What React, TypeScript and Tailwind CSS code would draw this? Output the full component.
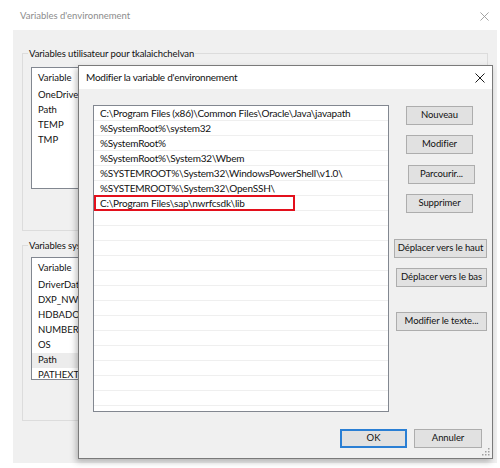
import React from 'react';

const pathItems = [
  'C:\\Program Files (x86)\\Common Files\\Oracle\\Java\\javapath',
  '%SystemRoot%\\system32',
  '%SystemRoot%',
  '%SystemRoot%\\System32\\Wbem',
  '%SYSTEMROOT%\\System32\\WindowsPowerShell\\v1.0\\',
  '%SYSTEMROOT%\\System32\\OpenSSH\\',
  'C:\\Program Files\\sap\\nwrfcsdk\\lib',
];

const userVars = ['OneDrive', 'Path', 'TEMP', 'TMP'];
const systemVars = ['DriverData', 'DXP_NWRFC', 'HDBADONET', 'NUMBER_OF_PROCESSORS', 'OS', 'Path', 'PATHEXT'];

function WinButton({ label, className = '' }: { label: string; className?: string }) {
  return (
    <button
      type="button"
      className={`h-[19px] flex items-center justify-center whitespace-nowrap border border-[#adadad] bg-[#e1e1e1] text-[9.5px] tracking-[-0.1px] text-[#111] ${className}`}
    >
      {label}
    </button>
  );
}

// petite croix de fermeture, trait fin
function CloseIcon({ color, size }: { color: string; size: number }) {
  return (
    <svg width={size} height={size} viewBox="0 0 10 10">
      <path d="M0.5 0.5 L9.5 9.5 M9.5 0.5 L0.5 9.5" stroke={color} strokeWidth="1" fill="none" />
    </svg>
  );
}

function VarList({ rows, selected, height }: { rows: string[]; selected?: number; height: string }) {
  return (
    <div className={`ml-[8px] mr-[8px] bg-white border border-[#828790] overflow-hidden text-[9.5px] ${height}`}>
      <div className="h-[20px] flex items-center pl-[6px]">Variable</div>
      {rows.map((r, i) => (
        <div
          key={r}
          className={`h-[15px] flex items-center pl-[6px] whitespace-nowrap ${i === selected ? 'bg-[#ececec]' : ''}`}
        >
          {r}
        </div>
      ))}
    </div>
  );
}

export default function App() {
  const emptyRows = Array.from({ length: 14 });

  return (
    <div className="relative w-[500px] h-[468px] bg-white overflow-hidden text-[#111] font-['Lato',sans-serif]">
      {/* fenêtre principale */}
      <div className="flex flex-col">
        <div className="h-[30px] flex items-center justify-between pl-[20px] pr-[11px] pt-[2px]">
          <span className="text-[9.5px] text-[#8c8c8c]">Variables d'environnement</span>
          <CloseIcon color="#9a9a9a" size={9} />
        </div>
        <div className="ml-[13px] mr-[3px] h-[433px] bg-[#f0f0f0] px-[9px] pt-[16px]">
          <fieldset className="h-[185px] border border-[#dcdcdc]">
            <legend className="ml-[5px] px-[1px] text-[9.5px] tracking-[-0.1px] leading-[15px]">
              Variables utilisateur pour tkalaichchelvan
            </legend>
            <div className="mt-[6px]">
              <VarList rows={userVars} height="h-[122px]" />
            </div>
          </fieldset>
          <fieldset className="mt-[7px] h-[183px] border border-[#dcdcdc]">
            <legend className="ml-[5px] px-[1px] text-[9.5px] tracking-[-0.1px] leading-[15px]">Variables système</legend>
            <div className="mt-[4px]">
              <VarList rows={systemVars} selected={5} height="h-[123px]" />
            </div>
          </fieldset>
        </div>
      </div>

      {/* boîte de dialogue modale */}
      <div className="absolute left-[78px] top-[65px] w-[415px] h-[394px] flex flex-col border border-[#7a7a7a] bg-[#f0f0f0] shadow-[-2px_3px_6px_rgba(0,0,0,0.25)]">
        <div className="h-[23px] shrink-0 bg-white flex items-center justify-between pl-[7px] pr-[7px]">
          <span className="text-[10px] tracking-[-0.25px]">Modifier la variable d'environnement</span>
          <CloseIcon color="#1b1b1b" size={10} />
        </div>
        <div className="flex pt-[16px]">
          <div className="ml-[14px] w-[296px] h-[307px] bg-white border border-[#828790] overflow-hidden text-[10px] tracking-[-0.2px]">
            {pathItems.map((p, i) => (
              <div key={p} className="relative h-[15px] flex items-center pl-[6px] border-b border-[#efefef] whitespace-nowrap">
                {p}
                {i === pathItems.length - 1 && (
                  <div className="absolute left-0 top-[-1px] w-[201px] h-[16px] border-2 border-[#e3101c]" />
                )}
              </div>
            ))}
            {emptyRows.map((_, i) => (
              <div key={i} className="h-[15px] border-b border-[#efefef]" />
            ))}
          </div>
          <div className="ml-[5px] mt-[1px] w-[93px] flex flex-col">
            <WinButton label="Nouveau" className="ml-[12px] w-[67px]" />
            <WinButton label="Modifier" className="ml-[12px] w-[67px] mt-[10px]" />
            <WinButton label="Parcourir..." className="ml-[14px] w-[67px] mt-[11px]" />
            <WinButton label="Supprimer" className="ml-[12px] w-[67px] mt-[10px]" />
            <WinButton label="Déplacer vers le haut" className="w-[93px] mt-[26px]" />
            <WinButton label="Déplacer vers le bas" className="ml-[2px] w-[91px] mt-[10px]" />
            <WinButton label="Modifier le texte..." className="ml-[2px] w-[91px] mt-[25px]" />
          </div>
        </div>
        <div className="flex justify-end gap-[7px] pr-[10px] mt-[17px]">
          <button
            type="button"
            className="h-[19px] w-[67px] flex items-center justify-center border-2 border-[#2a7fd4] bg-[#e1e1e1] text-[9.5px]"
          >
            OK
          </button>
          <WinButton label="Annuler" className="w-[68px]" />
        </div>
        {/* poignée de redimensionnement */}
        <svg className="absolute right-[2px] bottom-[2px]" width="8" height="8" viewBox="0 0 8 8">
          {[
            [6, 0],
            [6, 3],
            [3, 3],
            [6, 6],
            [3, 6],
            [0, 6],
          ].map(([x, y]) => (
            <rect key={`${x}-${y}`} x={x} y={y} width="1.5" height="1.5" fill="#a0a0a0" />
          ))}
        </svg>
      </div>
    </div>
  );
}
